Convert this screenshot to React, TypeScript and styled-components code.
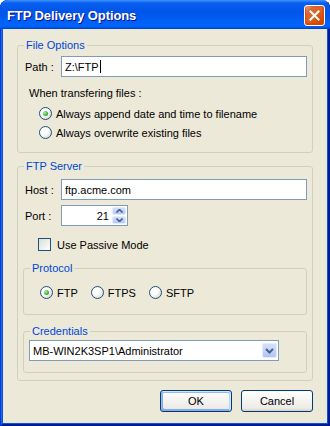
import React from "react";
import styled, { createGlobalStyle } from "styled-components";

const Global = createGlobalStyle`
  html, body { margin: 0; padding: 0; background: #ffffff; }
  body {
    font-family: "Liberation Sans", Arial, sans-serif;
    font-size: 11px;
    color: #000;
  }
  * { box-sizing: border-box; }
`;

const Window = styled.div`
  width: 330px;
  height: 426px;
  display: flex;
  flex-direction: column;
  background: #0855dd;
  border-radius: 8px 8px 0 0;
  overflow: hidden;
  box-shadow: inset 1px 0 #0831d9, inset -1px -1px #00138c, inset 2px 0 #166aee,
    inset -2px -2px #001ea0;
`;

const TitleBar = styled.div`
  height: 29px;
  flex: none;
  display: flex;
  align-items: center;
  justify-content: space-between;
  padding: 0 5px 0 7px;
  border-radius: 8px 8px 0 0;
  background: linear-gradient(
    180deg,
    #3d95ff 0%,
    #0a5ff0 10%,
    #0054e8 40%,
    #0062f8 80%,
    #0066ff 90%,
    #0050e0 96%,
    #003dd7 100%
  );
`;

const Title = styled.span`
  font-family: "Liberation Sans", Arial, sans-serif;
  font-weight: bold;
  font-size: 13px;
  color: #fff;
  text-shadow: 1px 1px #0f1089;
  margin-top: 2px;
  letter-spacing: -0.1px;
`;

const CloseButton = styled.button`
  width: 21px;
  height: 21px;
  margin-top: 2px;
  padding: 0;
  border: 1px solid #fff;
  border-radius: 3px;
  display: flex;
  align-items: center;
  justify-content: center;
  background: radial-gradient(
    circle at 90% 90%,
    #cc4600 0%,
    #dc6527 55%,
    #d9693a 75%,
    #f0a68a 92%,
    #fff 100%
  );
  box-shadow: inset 0 -1px 2px 1px #da4600;
`;

const Body = styled.div`
  flex: 1;
  margin: 0 3px 3px;
  background: #ece9d8;
  padding: 0 14px 11px;
  display: flex;
  flex-direction: column;
`;

const Group = styled.fieldset<{ $pad: string; $mt: number }>`
  margin: ${(p) => p.$mt}px 0 0;
  padding: ${(p) => p.$pad};
  border: 1px solid #d0d0bf;
  border-radius: 3px;
  min-width: 0;
`;

const Legend = styled.legend<{ $ml: number }>`
  margin-left: ${(p) => p.$ml}px;
  padding: 0 2px;
  color: #0046d5;
  font-size: 11px;
  line-height: 13px;
`;

const FieldRow = styled.div<{ $mt?: number; $indent?: number }>`
  display: flex;
  align-items: center;
  height: 21px;
  margin-top: ${(p) => p.$mt ?? 0}px;
  padding-left: ${(p) => p.$indent ?? 0}px;
`;

const FieldLabel = styled.span`
  width: 36px;
  flex: none;
`;

const TextBox = styled.div`
  flex: 1;
  height: 21px;
  border: 1px solid #7f9db9;
  background: #fff;
  display: flex;
  align-items: center;
  padding: 0 3px;
  white-space: nowrap;
`;

const Caret = styled.span`
  display: inline-block;
  width: 1px;
  height: 13px;
  background: #000;
  margin-left: 1px;
`;

const Note = styled.div`
  margin-top: 10px;
  padding-left: 4px;
  line-height: 13px;
`;

const OptionRow = styled.div<{ $mt?: number; $indent: number; $gap?: number }>`
  display: flex;
  align-items: center;
  height: 19px;
  margin-top: ${(p) => p.$mt ?? 0}px;
  padding-left: ${(p) => p.$indent}px;
  gap: ${(p) => p.$gap ?? 0}px;
`;

const Option = styled.label`
  display: flex;
  align-items: center;
  gap: 4px;
  white-space: nowrap;
`;

const RadioCircle = styled.span<{ $checked?: boolean }>`
  width: 13px;
  height: 13px;
  flex: none;
  border-radius: 50%;
  border: 1px solid #1c5180;
  background: radial-gradient(circle at 35% 35%, #ffffff 35%, #e4e2da 70%, #c9c6bb 100%);
  display: flex;
  align-items: center;
  justify-content: center;
  &::after {
    content: "";
    display: ${(p) => (p.$checked ? "block" : "none")};
    width: 5px;
    height: 5px;
    border-radius: 50%;
    background: radial-gradient(circle at 35% 35%, #bdf0b5 0%, #4fc34a 45%, #21a121 80%, #1a8a1a 100%);
  }
`;

const PortBox = styled.div`
  width: 67px;
  height: 21px;
  border: 1px solid #7f9db9;
  background: #fff;
  display: flex;
  align-items: center;
  padding: 1px;
`;

const PortValue = styled.span`
  flex: 1;
  text-align: right;
  padding-right: 3px;
`;

const Spin = styled.div`
  width: 14px;
  height: 17px;
  display: flex;
  flex-direction: column;
  gap: 1px;
`;

const SpinPart = styled.span`
  flex: 1;
  border-radius: 2px;
  background: linear-gradient(180deg, #d2defc 0%, #c1d3fb 60%, #b2c6f5 100%);
  border: 1px solid #e6ecfd;
  display: flex;
  align-items: center;
  justify-content: center;
`;

const CheckRow = styled.label`
  display: flex;
  align-items: center;
  gap: 6px;
  margin-top: 12px;
  padding-left: 15px;
  height: 13px;
`;

const CheckBox = styled.span`
  width: 13px;
  height: 13px;
  flex: none;
  border: 1px solid #1c5180;
  background: linear-gradient(135deg, #dcdcd7 0%, #ffffff 100%);
`;

const Select = styled.div`
  width: 250px;
  height: 21px;
  border: 1px solid #7f9db9;
  background: #fff;
  display: flex;
  align-items: center;
  padding: 0 1px 0 3px;
`;

const SelectText = styled.span`
  flex: 1;
  white-space: nowrap;
`;

const DropButton = styled.span`
  width: 15px;
  height: 15px;
  border-radius: 2px;
  border: 1px solid #e6ecfd;
  background: linear-gradient(180deg, #d4e0fd 0%, #c1d3fb 55%, #b0c4f5 100%);
  display: flex;
  align-items: center;
  justify-content: center;
`;

const ButtonRow = styled.div`
  display: flex;
  justify-content: flex-end;
  gap: 9px;
  margin-top: 9px;
`;

const Button = styled.button<{ $default?: boolean }>`
  width: 72px;
  height: 22px;
  padding: 0;
  border: 1px solid #003c74;
  border-radius: 3px;
  background: linear-gradient(180deg, #ffffff 0%, #ecebe6 86%, #d6d0c5 100%);
  font-family: "Liberation Sans", Arial, sans-serif;
  font-size: 11px;
  color: #000;
  box-shadow: ${(p) =>
    p.$default
      ? "inset -1px 1px #cee7ff, inset 1px 2px #98b8ea, inset -2px 2px #bcd4f6, inset 1px -1px #89ade4, inset 2px -2px #89ade4"
      : "none"};
`;

const Radio = ({ label, checked }: { label: string; checked?: boolean }) => (
  <Option>
    <RadioCircle $checked={checked} />
    <span>{label}</span>
  </Option>
);

export default function App() {
  return (
    <>
      <Global />
      <Window>
        <TitleBar>
          <Title>FTP Delivery Options</Title>
          <CloseButton aria-label="Close">
            <svg width="11" height="11" viewBox="0 0 11 11">
              <path d="M1.5 1.5 L9.5 9.5 M9.5 1.5 L1.5 9.5" stroke="#fff" strokeWidth="2" strokeLinecap="square" />
            </svg>
          </CloseButton>
        </TitleBar>
        <Body>
          <Group $mt={10} $pad="4px 5px 10px 7px">
            <Legend $ml={-1}>File Options</Legend>
            <FieldRow>
              <FieldLabel>Path :</FieldLabel>
              <TextBox>
                Z:\FTP
                <Caret />
              </TextBox>
            </FieldRow>
            <Note>When transfering files :</Note>
            <OptionRow $mt={4} $indent={14}>
              <Radio label="Always append date and time to filename" checked />
            </OptionRow>
            <OptionRow $indent={14}>
              <Radio label="Always overwrite existing files" />
            </OptionRow>
          </Group>

          <Group $mt={7} $pad="6px 5px 7px 5px">
            <Legend $ml={1}>FTP Server</Legend>
            <FieldRow $indent={2}>
              <FieldLabel>Host :</FieldLabel>
              <TextBox>ftp.acme.com</TextBox>
            </FieldRow>
            <FieldRow $indent={2} $mt={5}>
              <FieldLabel>Port :</FieldLabel>
              <PortBox>
                <PortValue>21</PortValue>
                <Spin>
                  <SpinPart>
                    <svg width="7" height="4" viewBox="0 0 7 4">
                      <path d="M0.5 3.5 L3.5 0.5 L6.5 3.5" stroke="#4d6185" strokeWidth="1.6" fill="none" />
                    </svg>
                  </SpinPart>
                  <SpinPart>
                    <svg width="7" height="4" viewBox="0 0 7 4">
                      <path d="M0.5 0.5 L3.5 3.5 L6.5 0.5" stroke="#4d6185" strokeWidth="1.6" fill="none" />
                    </svg>
                  </SpinPart>
                </Spin>
              </PortBox>
            </FieldRow>
            <CheckRow>
              <CheckBox />
              <span>Use Passive Mode</span>
            </CheckRow>

            <Group $mt={11} $pad="8px 4px 12px 16px">
              <Legend $ml={-10}>Protocol</Legend>
              <OptionRow $indent={0} $gap={13}>
                <Radio label="FTP" checked />
                <Radio label="FTPS" />
                <Radio label="SFTP" />
              </OptionRow>
            </Group>

            <Group $mt={10} $pad="2px 4px 11px 5px">
              <Legend $ml={1}>Credentials</Legend>
              <Select>
                <SelectText>MB-WIN2K3SP1\Administrator</SelectText>
                <DropButton>
                  <svg width="9" height="6" viewBox="0 0 9 6">
                    <path d="M1 1 L4.5 4.5 L8 1" stroke="#4d6185" strokeWidth="2" fill="none" />
                  </svg>
                </DropButton>
              </Select>
            </Group>
          </Group>

          <ButtonRow>
            <Button $default>OK</Button>
            <Button>Cancel</Button>
          </ButtonRow>
        </Body>
      </Window>
    </>
  );
}
